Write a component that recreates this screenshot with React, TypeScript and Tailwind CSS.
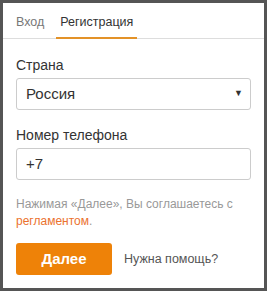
export default function App() {
    return (
        <div className="w-[267px] h-[291px] border-[3px] border-[#555] bg-white font-['Liberation_Sans',Arial,sans-serif]">
            {/* tabs */}
            <div className="flex h-[36px] border-b border-[#ddd] pl-[12px] text-[12.5px]">
                <div className="px-[1px] pt-[10px] text-[#777]">Вход</div>
                <div className="ml-[11px] px-[4px] pt-[10px] text-[#333] border-b-2 border-[#e39228] mb-[-1px]">Регистрация</div>
            </div>

            <div className="px-[13px] pt-[18px]">
                <div className="text-[14px] text-[#333] leading-[16px]">Страна</div>
                <div className="mt-[5px] h-[32px] border border-[#ccc] rounded-[3px] flex items-center justify-between pl-[9px] pr-[7px]">
                    <span className="text-[15px] text-[#333]">Россия</span>
                    <span className="text-[9px] text-[#333]">▼</span>
                </div>

                <div className="mt-[17px] text-[14px] text-[#333] leading-[16px]">Номер телефона</div>
                <div className="mt-[5px] h-[32px] border border-[#ccc] rounded-[3px] flex items-center pl-[9px]">
                    <span className="text-[15px] text-[#333]">+7</span>
                </div>

                <p className="mt-[16px] text-[12px] leading-[17px] text-[#999]">
                    Нажимая «Далее», Вы соглашаетесь с <span className="text-[#eb722e]">регламентом</span>.
                </p>

                <div className="mt-[13px] flex items-center">
                    <button className="w-[96px] h-[32px] rounded-[3px] bg-[#ee8208] text-white text-[15px] font-bold">Далее</button>
                    <span className="ml-[12px] text-[12.5px] text-[#555]">Нужна помощь?</span>
                </div>
            </div>
        </div>
    );
}
